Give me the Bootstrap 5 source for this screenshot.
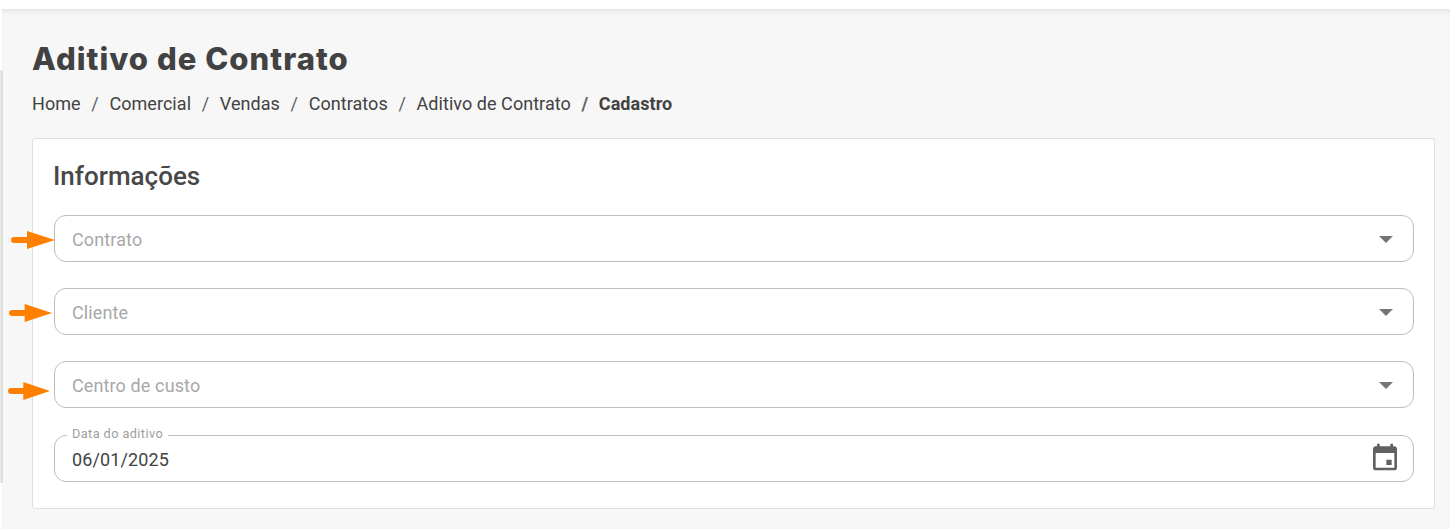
<!DOCTYPE html>
<html lang="pt-BR">

<head>
    <meta charset="UTF-8">
    <meta name="viewport" content="width=device-width, initial-scale=1.0">
    <title>Aditivo de Contrato</title>
    <link rel="stylesheet" href="https://cdn.jsdelivr.net/npm/bootstrap@5.3.0/dist/css/bootstrap.min.css">
    <style>
        html, body {
            height: 529px;
            overflow: hidden;
            background: #fff;
        }

        body {
            font-family: Roboto, "Liberation Sans", sans-serif;
            color: #424242;
        }

        .top-strip {
            height: 9px;
            background: #fff;
        }

        .page-area {
            position: relative;
            height: 520px;
            margin-left: 2px;
            padding: 26px 15px 0 30px;
            background: #f7f7f7;
            box-shadow: inset 0 5px 5px -3px rgba(0, 0, 0, .09);
        }

        .side-shade {
            position: absolute;
            left: -2px;
            top: 61px;
            width: 3px;
            height: 413px;
            background: linear-gradient(to right, #ececec, #d9d9d9);
        }

        .page-title {
            font-family: Inter, "Liberation Sans", sans-serif;
            font-size: 31px;
            font-weight: 800;
            line-height: 48px;
            letter-spacing: 1.05px;
            margin: 0 0 9px;
            color: #424242;
        }

        .crumbs {
            font-size: 18px;
            line-height: 24px;
            letter-spacing: .05px;
            margin-bottom: 22px;
            --bs-breadcrumb-divider-color: #616161;
            --bs-breadcrumb-item-active-color: #424242;
            --bs-breadcrumb-item-padding-x: 10.65px;
        }

        .crumbs .breadcrumb-item a {
            color: #424242;
            text-decoration: none;
        }

        .crumbs .breadcrumb-item.active {
            font-weight: 700;
        }

        .form-panel {
            height: 371px;
            padding: 19px 20px 0 21px;
            border: 1px solid #e0e0e0;
            border-radius: 3px;
            background: #fff;
        }

        .panel-heading {
            font-size: 26px;
            font-weight: 500;
            line-height: 36px;
            margin: 0 0 21px -1px;
            color: #484848;
        }

        .field-box {
            position: relative;
            display: flex;
            align-items: center;
            height: 47px;
            margin-bottom: 26px;
            padding: 1px 17px 0;
            border: 1px solid #bdbdbd;
            border-radius: 12px;
            font-size: 18px;
        }

        .field-box:last-child {
            margin-top: 27px;
            margin-bottom: 0;
        }

        .field-text {
            flex-grow: 1;
            letter-spacing: .12px;
            color: #a8a8a8;
        }

        .field-value {
            color: #424242;
        }

        .field-label {
            position: absolute;
            top: -10px;
            left: 12px;
            padding: 0 5px;
            background: #fff;
            color: #9e9e9e;
            font-size: 12.75px;
            line-height: 16px;
            letter-spacing: .4px;
        }

        .select-caret {
            width: 0;
            height: 0;
            margin-right: 3px;
            border-left: 7px solid transparent;
            border-right: 7px solid transparent;
            border-top: 7px solid #757575;
        }

        .calendar-icon {
            width: 32px;
            height: 32px;
            margin-top: -4px;
            margin-right: -5px;
            fill: #616161;
        }

        .pointer-arrow {
            position: absolute;
            height: 18px;
        }

        .arrow-one { left: 9px; top: 222px; width: 44px; }
        .arrow-two { left: 7px; top: 295px; width: 43px; }
        .arrow-three { left: 6px; top: 373px; width: 42px; }
    </style>
</head>

<body>
    <div class="top-strip"></div>
    <main class="page-area">
        <div class="side-shade"></div>
        <h1 class="page-title">Aditivo de Contrato</h1>
        <nav aria-label="breadcrumb">
            <ol class="breadcrumb crumbs">
                <li class="breadcrumb-item"><a href="#">Home</a></li>
                <li class="breadcrumb-item"><a href="#">Comercial</a></li>
                <li class="breadcrumb-item"><a href="#">Vendas</a></li>
                <li class="breadcrumb-item"><a href="#">Contratos</a></li>
                <li class="breadcrumb-item"><a href="#">Aditivo de Contrato</a></li>
                <li class="breadcrumb-item active" aria-current="page">Cadastro</li>
            </ol>
        </nav>

        <section class="form-panel">
            <h2 class="panel-heading">Informações</h2>
            <div class="field-box">
                <span class="field-text">Contrato</span>
                <span class="select-caret"></span>
            </div>
            <div class="field-box">
                <span class="field-text">Cliente</span>
                <span class="select-caret"></span>
            </div>
            <div class="field-box">
                <span class="field-text">Centro de custo</span>
                <span class="select-caret"></span>
            </div>
            <div class="field-box">
                <span class="field-label">Data do aditivo</span>
                <span class="field-text field-value">06/01/2025</span>
                <svg class="calendar-icon" viewBox="0 0 24 24" aria-hidden="true">
                    <path d="M19 4h-1V2h-2v2H8V2H6v2H5c-1.100 0-2 .9-2 2v14c0 1.100.9 2 2 2h14c1.100 0 2-.9 2-2V6c0-1.100-.9-2-2-2zm0 16H5V9h14v11zm-6-6h4v4h-4z"/>
                </svg>
            </div>
        </section>

        <svg class="pointer-arrow arrow-one" viewBox="0 0 44 18" preserveAspectRatio="none" aria-hidden="true">
            <path d="M3 6h13V0l28 9-28 9v-6H3a3 3 0 0 1 0-6z" fill="#ff8000"/>
        </svg>
        <svg class="pointer-arrow arrow-two" viewBox="0 0 44 18" preserveAspectRatio="none" aria-hidden="true">
            <path d="M3 6h13V0l28 9-28 9v-6H3a3 3 0 0 1 0-6z" fill="#ff8000"/>
        </svg>
        <svg class="pointer-arrow arrow-three" viewBox="0 0 44 18" preserveAspectRatio="none" aria-hidden="true">
            <path d="M3 6h13V0l28 9-28 9v-6H3a3 3 0 0 1 0-6z" fill="#ff8000"/>
        </svg>
    </main>
    <script src="https://cdn.jsdelivr.net/npm/bootstrap@5.3.0/dist/js/bootstrap.bundle.min.js"></script>
</body>

</html>
